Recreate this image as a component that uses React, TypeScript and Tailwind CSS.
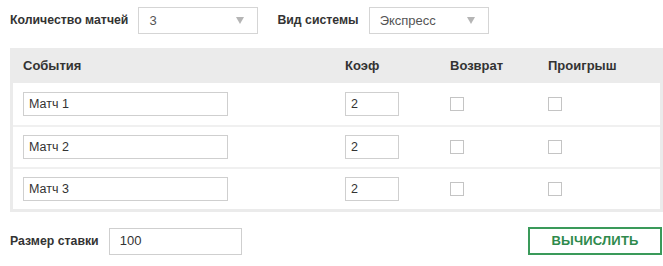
import React from "react";

const rows = ["Матч 1", "Матч 2", "Матч 3"];

function Select({ value, width }: { value: string; width: string }) {
  return (
    <div className={`${width} h-[27px] border border-[#d5d5d5] bg-white flex items-center justify-between pl-[10px] pr-[13px]`}>
      <span className="text-[13px] text-[#555]">{value}</span>
      <span className="w-0 h-0 border-l-[4px] border-r-[4px] border-t-[7px] border-l-transparent border-r-transparent border-t-[#b5b5b5]" />
    </div>
  );
}

function Box() {
  return <div className="w-[14px] h-[14px] border border-[#c4c4c4] bg-white" />;
}

export default function App() {
  return (
    <div className="w-[663px] h-[266px] bg-white pl-[10px] pt-[7px] font-['Liberation_Sans',Arial,sans-serif] text-[#333]">
      {/* Top controls */}
      <div className="flex items-center h-[27px]">
        <span className="text-[12.3px] font-bold text-[#333]">Количество матчей</span>
        <div className="ml-[10px]">
          <Select value="3" width="w-[120px]" />
        </div>
        <span className="ml-[19px] text-[12.3px] font-bold text-[#333]">Вид системы</span>
        <div className="ml-[10px]">
          <Select value="Экспресс" width="w-[120px]" />
        </div>
      </div>

      {/* Table */}
      <div className="mt-[14px] bg-[#ebebeb] px-[3px] pb-[3px]">
        <div className="grid grid-cols-[322px_105px_98px_1fr] items-center h-[35px] pl-[10px] text-[13px] font-bold text-[#333] pt-[1px]">
          <span>События</span>
          <span>Коэф</span>
          <span>Возврат</span>
          <span>Проигрыш</span>
        </div>
        <div className="bg-white">
          {rows.map((r, i) => (
            <div
              key={r}
              className={`grid grid-cols-[322px_105px_98px_1fr] items-center h-[42px] pl-[10px] ${i > 0 ? "border-t-2 border-[#f0f0f0]" : ""}`}
            >
              <div className="w-[205px] h-[24px] border border-[#cfcfcf] flex items-center px-[5px] text-[12.5px] text-[#333]">{r}</div>
              <div className="w-[54px] h-[24px] border border-[#cfcfcf] flex items-center px-[5px] text-[12.5px] text-[#333]">2</div>
              <Box />
              <Box />
            </div>
          ))}
        </div>
      </div>

      {/* Bottom */}
      <div className="mt-[15px] flex items-center justify-between h-[28px]">
        <div className="flex items-center">
          <span className="text-[12.3px] font-bold text-[#333]">Размер ставки</span>
          <div className="ml-[10px] w-[133px] h-[27px] border border-[#cfcfcf] flex items-center px-[10px] text-[13px] text-[#333]">100</div>
        </div>
        <button className="mr-[1px] w-[134px] h-[28px] border-2 border-[#3a9a5a] text-[#2f8a4c] text-[13px] font-bold uppercase tracking-[0.2px]">
          Вычислить
        </button>
      </div>
    </div>
  );
}
